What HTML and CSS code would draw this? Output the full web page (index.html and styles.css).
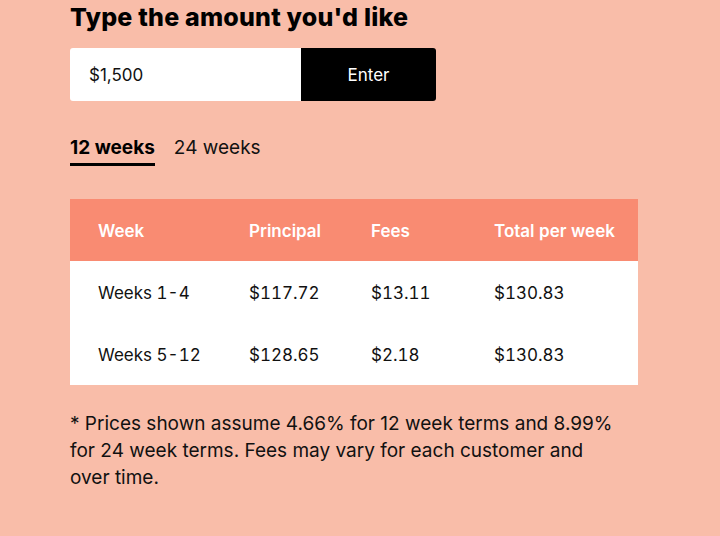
FILE: index.html
```html
<!DOCTYPE html>
<html>
<head>
<meta charset="utf-8">
<link rel="stylesheet" href="styles.css">
</head>
<body>
<main class="page">
  <h1 class="title">Type the amount you'd like</h1>
  <div class="amount">
    <div class="amount-input">$1,500</div>
    <button class="amount-btn">Enter</button>
  </div>
  <div class="tabs">
    <span class="tab active">12 weeks</span>
    <span class="tab">24 weeks</span>
  </div>
  <div class="table">
    <div class="row head">
      <span>Week</span><span>Principal</span><span>Fees</span><span>Total per week</span>
    </div>
    <div class="row">
      <span>Weeks 1-4</span><span>$117.72</span><span>$13.11</span><span>$130.83</span>
    </div>
    <div class="row">
      <span>Weeks 5-12</span><span>$128.65</span><span>$2.18</span><span>$130.83</span>
    </div>
  </div>
  <p class="note">* Prices shown assume 4.66% for 12 week terms and 8.99% for 24 week terms. Fees may vary for each customer and over time.</p>
</main>
</body>
</html>
```

FILE: styles.css
```css
html, body {
  margin: 0;
  padding: 0;
}
body {
  background: #f9bda9;
  font-family: Inter, "Liberation Sans", sans-serif;
  color: #111;
  width: 720px;
  height: 536px;
  overflow: hidden;
}
.page {
  padding: 0 0 0 70px;
  width: 568px;
}
.title {
  margin: 0;
  padding-top: 2px;
  font-size: 25px;
  font-weight: 800;
  line-height: 30px;
  letter-spacing: 0.2px;
  color: #000;
}
.amount {
  display: flex;
  margin-top: 16px;
  width: 366px;
  height: 53px;
}
.amount-input {
  flex: 0 0 231px;
  background: #fff;
  border-radius: 3px 0 0 3px;
  display: flex;
  align-items: center;
  padding-left: 19px;
  box-sizing: border-box;
  font-size: 17px;
  color: #111;
}
.amount-btn {
  flex: 1;
  background: #000;
  color: #fff;
  border: none;
  border-radius: 0 3px 3px 0;
  font-family: inherit;
  font-size: 17px;
  padding: 0;
}
.tabs {
  display: flex;
  gap: 19px;
  margin-top: 33px;
  height: 34px;
}
.tab {
  font-size: 19px;
  line-height: 28px;
  color: #111;
}
.tab.active {
  font-weight: 700;
  border-bottom: 3px solid #000;
  height: 29px;
  color: #000;
}
.table {
  margin-top: 31px;
  width: 568px;
  background: #fff;
}
.row {
  display: grid;
  grid-template-columns: 151px 122px 123px 1fr;
  padding: 2px 0 0 28px;
  box-sizing: border-box;
  height: 62px;
  align-items: center;
  font-size: 17px;
  color: #111;
  font-variant-numeric: tabular-nums;
}
.row.head {
  background: #f98b72;
  color: #fff;
  font-weight: 600;
}
.note {
  margin: 25px 0 0;
  font-size: 19px;
  line-height: 27px;
  color: #111;
  width: 550px;
}
```
